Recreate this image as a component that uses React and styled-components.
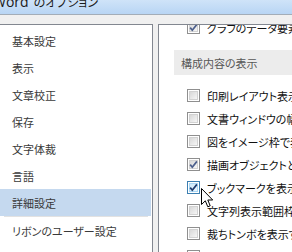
import React from 'react';
import styled, { createGlobalStyle, css } from 'styled-components';

const GlobalStyle = createGlobalStyle`
	html, body {
		margin: 0;
		padding: 0;
		overflow: hidden;
		background: #f0f0f0;
	}
	body {
		font-family: "Noto Sans CJK JP", "Noto Sans", sans-serif;
		font-feature-settings: "palt";
	}
`;

const Window = styled.div`
	position: relative;
	width: 292px;
	height: 252px;
	display: flex;
	flex-direction: column;
	overflow: hidden;
`;

const TitleBar = styled.div`
	height: 14px;
	flex: none;
	background: linear-gradient(#cfe3f8, #b8d5f4);
	border-bottom: 1px solid #a3adb8;
	overflow: hidden;
`;

const Title = styled.div`
	margin: -4px 0 0 -7px;
	font-size: 12px;
	line-height: 12px;
	color: #1a1a1a;
	white-space: nowrap;
`;

const TitleLatin = styled.span`
	font-family: "Open Sans", "DejaVu Sans", sans-serif;
	font-size: 14px;
	margin-right: 5px;
`;

const Body = styled.div`
	flex: 1;
	display: flex;
	gap: 5px;
	padding-top: 9px;
	background: #f0f0f0;
	min-height: 0;
`;

const Sidebar = styled.div`
	width: 153px;
	flex: none;
	background: #fff;
	border-top: 1px solid #828790;
	border-right: 1px solid #828790;
	padding: 2px 1px 0 0;
	box-sizing: border-box;
`;

const NavItem = styled.div`
	height: 27px;
	display: flex;
	align-items: center;
	padding-left: 12px;
	font-size: 11px;
	color: #3a3a3a;
	white-space: nowrap;
	${props => props.active && css`
		background: #c5d9ef;
	`};
`;

const NavSeparator = styled.div`
	height: 1px;
	margin: 0 3px 0 4px;
	background: #e2e2e2;
`;

const Content = styled.div`
	flex: 1;
	background: #fff;
	border-top: 1px solid #828790;
	border-left: 1px solid #828790;
	overflow: hidden;
	min-width: 0;
`;

const Scroller = styled.div`
	margin-top: -9px;
`;

const OptionRow = styled.div`
	height: 23px;
	display: flex;
	align-items: center;
	gap: 7px;
	padding-left: 28px;
	font-size: 11px;
	color: #111;
	white-space: nowrap;
`;

const SectionHeader = styled.div`
	margin: 11px 0 9px 15px;
	height: 25px;
	display: flex;
	align-items: center;
	padding-left: 7px;
	background: #ececec;
	font-size: 11px;
	color: #575757;
	white-space: nowrap;
`;

const Box = styled.span`
	width: 13px;
	height: 13px;
	flex: none;
	box-sizing: border-box;
	border: 1px solid #8f8f8f;
	display: flex;
	align-items: center;
	justify-content: center;
	background: #fff;
	${props => props.hover && css`
		border-color: #3c7fb1;
	`};
`;

const BoxInner = styled.span`
	width: 9px;
	height: 9px;
	box-sizing: border-box;
	border: 1px solid #d2d2d2;
	background: linear-gradient(135deg, #d8d8d8, #f6f6f6);
	position: relative;
	${props => props.hover && css`
		border-color: #a9d7f5;
		background: linear-gradient(135deg, #cde9fb, #eaf6fd);
	`};
	svg {
		position: absolute;
		left: -2px;
		top: -2px;
	}
`;

const Cursor = styled.svg`
	position: absolute;
	left: 201px;
	top: 188px;
`;

const Checkbox = ({ checked, hover }) => (
	<Box hover={hover}>
		<BoxInner hover={hover}>
			{checked && (
				<svg width="11" height="11" viewBox="0 0 11 11">
					<path d="M2.2 5.6 L4.3 8.2 L8.9 2.4" fill="none"
						stroke={hover ? '#1d3a6e' : '#4c5f8c'} strokeWidth="1.7" />
				</svg>
			)}
		</BoxInner>
	</Box>
);

const navItems = ['基本設定', '表示', '文章校正', '保存', '文字体裁', '言語', '詳細設定'];

const options = [
	{ label: '印刷レイアウト表示で背景の色とイメージを表示する' },
	{ label: '文書ウィンドウの幅に合わせて文字列を折り返す' },
	{ label: '図をイメージ枠で表示する' },
	{ label: '描画オブジェクトとテキスト ボックスを画面に表示する', checked: true },
	{ label: 'ブックマークを表示する', checked: true, hover: true },
	{ label: '文字列表示範囲枠を表示する' },
	{ label: '裁ちトンボを表示する' },
	{ label: 'フィールド コードを表示する' },
];

const App = () => {
	return (
		<Window>
			<GlobalStyle />
			<TitleBar>
				<Title><TitleLatin>Word</TitleLatin>のオプション</Title>
			</TitleBar>
			<Body>
				<Sidebar>
					{navItems.map(item => (
						<NavItem key={item} active={item === '詳細設定'}>{item}</NavItem>
					))}
					<NavSeparator />
					<NavItem>リボンのユーザー設定</NavItem>
				</Sidebar>
				<Content>
					<Scroller>
						<OptionRow>
							<Checkbox checked />
							グラフのデータ要素を追跡する書式設定とラベル
						</OptionRow>
						<SectionHeader>構成内容の表示</SectionHeader>
						{options.map(opt => (
							<OptionRow key={opt.label}>
								<Checkbox checked={opt.checked} hover={opt.hover} />
								{opt.label}
							</OptionRow>
						))}
					</Scroller>
				</Content>
			</Body>
			<Cursor width="13" height="21" viewBox="0 0 13 21">
				<path d="M0.5 0.5 L0.5 16.5 L4.3 12.8 L6.8 18.8 L9.2 17.8 L6.8 12 L11.7 12 Z"
					fill="#fff" stroke="#000" strokeWidth="1" strokeLinejoin="miter" />
			</Cursor>
		</Window>
	);
};

export default App;
